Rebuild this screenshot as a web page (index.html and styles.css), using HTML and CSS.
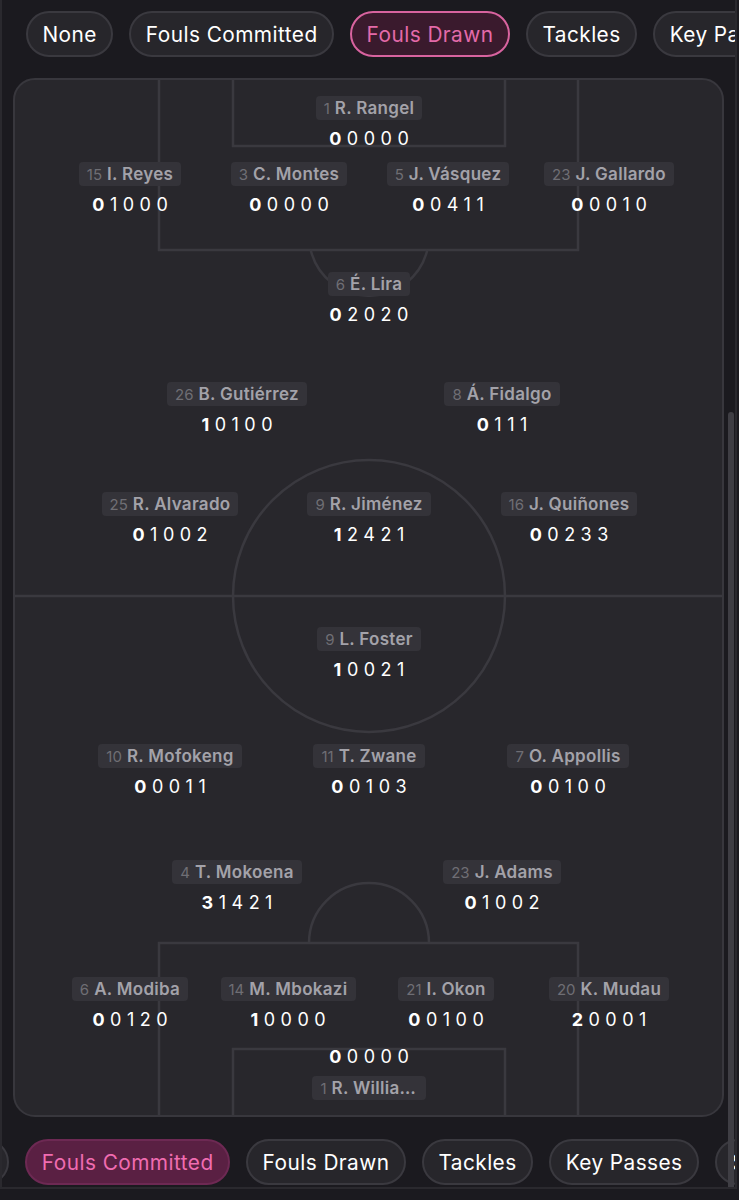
FILE: index.html
```html
<!DOCTYPE html>
<html>
<head>
<meta charset="utf-8">
<link rel="stylesheet" href="styles.css">
</head>
<body>
<div class="frame">
  <div class="chips">
    <div class="chip">None</div>
    <div class="chip">Fouls Committed</div>
    <div class="chip chip-active">Fouls Drawn</div>
    <div class="chip">Tackles</div>
    <div class="chip">Key Passes</div>
    <div class="chip">Shots</div>
  </div>

  <div class="pitch">
    <svg class="lines" width="707" height="1035" viewBox="15 80 707 1035">
      <line x1="15" y1="596" x2="722" y2="596"/>
      <circle cx="369" cy="596" r="136"/>
      <polyline points="159,70 159,250 578,250 578,70"/>
      <polyline points="233,70 233,146 505,146 505,70"/>
      <path d="M 310.7 250 A 60 60 0 0 0 427.3 250"/>
      <polyline points="159,1125 159,943 578,943 578,1125"/>
      <polyline points="233,1125 233,1049 505,1049 505,1125"/>
      <path d="M 309 943 A 60 60 0 0 1 429 943"/>
    </svg>

    <div class="player" style="left:354px;top:16px"><div class="tag"><span class="num">1</span><span class="name">R. Rangel</span></div><div class="stats"><b>0</b>0000</div></div>

    <div class="player" style="left:115px;top:82px"><div class="tag"><span class="num">15</span><span class="name">I. Reyes</span></div><div class="stats"><b>0</b>1000</div></div>
    <div class="player" style="left:274px;top:82px"><div class="tag"><span class="num">3</span><span class="name">C. Montes</span></div><div class="stats"><b>0</b>0000</div></div>
    <div class="player" style="left:433px;top:82px"><div class="tag"><span class="num">5</span><span class="name">J. Vásquez</span></div><div class="stats"><b>0</b>0411</div></div>
    <div class="player" style="left:594px;top:82px"><div class="tag"><span class="num">23</span><span class="name">J. Gallardo</span></div><div class="stats"><b>0</b>0010</div></div>

    <div class="player" style="left:354px;top:192px"><div class="tag"><span class="num">6</span><span class="name">É. Lira</span></div><div class="stats"><b>0</b>2020</div></div>

    <div class="player" style="left:222px;top:302px"><div class="tag"><span class="num">26</span><span class="name">B. Gutiérrez</span></div><div class="stats"><b>1</b>0100</div></div>
    <div class="player" style="left:487px;top:302px"><div class="tag"><span class="num">8</span><span class="name">Á. Fidalgo</span></div><div class="stats"><b>0</b>111</div></div>

    <div class="player" style="left:155px;top:412px"><div class="tag"><span class="num">25</span><span class="name">R. Alvarado</span></div><div class="stats"><b>0</b>1002</div></div>
    <div class="player" style="left:354px;top:412px"><div class="tag"><span class="num">9</span><span class="name">R. Jiménez</span></div><div class="stats"><b>1</b>2421</div></div>
    <div class="player" style="left:554px;top:412px"><div class="tag"><span class="num">16</span><span class="name">J. Quiñones</span></div><div class="stats"><b>0</b>0233</div></div>

    <div class="player" style="left:354px;top:547px"><div class="tag"><span class="num">9</span><span class="name">L. Foster</span></div><div class="stats"><b>1</b>0021</div></div>

    <div class="player" style="left:155px;top:664px"><div class="tag"><span class="num">10</span><span class="name">R. Mofokeng</span></div><div class="stats"><b>0</b>0011</div></div>
    <div class="player" style="left:354px;top:664px"><div class="tag"><span class="num">11</span><span class="name">T. Zwane</span></div><div class="stats"><b>0</b>0103</div></div>
    <div class="player" style="left:553px;top:664px"><div class="tag"><span class="num">7</span><span class="name">O. Appollis</span></div><div class="stats"><b>0</b>0100</div></div>

    <div class="player" style="left:222px;top:780px"><div class="tag"><span class="num">4</span><span class="name">T. Mokoena</span></div><div class="stats"><b>3</b>1421</div></div>
    <div class="player" style="left:487px;top:780px"><div class="tag"><span class="num">23</span><span class="name">J. Adams</span></div><div class="stats"><b>0</b>1002</div></div>

    <div class="player" style="left:115px;top:897px"><div class="tag"><span class="num">6</span><span class="name">A. Modiba</span></div><div class="stats"><b>0</b>0120</div></div>
    <div class="player" style="left:273px;top:897px"><div class="tag"><span class="num">14</span><span class="name">M. Mbokazi</span></div><div class="stats"><b>1</b>0000</div></div>
    <div class="player" style="left:431px;top:897px"><div class="tag"><span class="num">21</span><span class="name">I. Okon</span></div><div class="stats"><b>0</b>0100</div></div>
    <div class="player" style="left:594px;top:897px"><div class="tag"><span class="num">20</span><span class="name">K. Mudau</span></div><div class="stats"><b>2</b>0001</div></div>

    <div class="player player-rev" style="left:354px;top:965px"><div class="tag"><span class="num">1</span><span class="name name-trunc">R. Williams</span></div><div class="stats"><b>0</b>0000</div></div>
  </div>

  <div class="chips chips-bottom">
    <div class="chip chip-scrolled">None</div>
    <div class="chip chip-filled">Fouls Committed</div>
    <div class="chip">Fouls Drawn</div>
    <div class="chip">Tackles</div>
    <div class="chip">Key Passes</div>
    <div class="chip">Shots</div>
  </div>

  <div class="scrollbar"></div>
</div>
</body>
</html>
```

FILE: styles.css
```css
* { box-sizing: border-box; }
html, body {
  margin: 0;
  padding: 0;
  background: #1b1a1f;
  font-family: Inter, "Noto Sans", "Liberation Sans", sans-serif;
}
.frame {
  position: relative;
  width: 737px;
  height: 1189px;
  border-left: 2px solid #2a292e;
  border-right: 2px solid #2a292e;
  border-bottom: 2px solid #2a292e;
  overflow: hidden;
}
.chips {
  display: flex;
  gap: 16px;
  padding: 11px 0 0 24px;
  white-space: nowrap;
}
.chip {
  flex: none;
  height: 46px;
  padding: 0 14.5px;
  display: flex;
  align-items: center;
  border-radius: 23px;
  background: #27262b;
  border: 2px solid #3a393f;
  color: #ffffff;
  font-size: 20.8px;
  letter-spacing: 0.45px;
}
.chip-active {
  background: #3a1a2d;
  border-color: #d8639f;
  color: #e46aa9;
}
.chip-filled {
  background: #5a2043;
  border-color: #6d2953;
  color: #f06cb1;
}
.chips-bottom {
  padding-top: 0;
  margin-top: 22px;
}
.chip-scrolled {
  margin-left: -104px;
}
.pitch {
  position: relative;
  margin: 21px 0 0 11px;
  width: 711px;
  height: 1039px;
  border: 2px solid #38373d;
  border-radius: 22px;
  background: #28272c;
  overflow: hidden;
}
.lines {
  position: absolute;
  left: 0;
  top: 0;
  fill: none;
  stroke: #3a393f;
  stroke-width: 2.5;
}
.player {
  position: absolute;
  width: 0;
  display: flex;
  flex-direction: column;
  align-items: center;
  gap: 7px;
}
.player-rev {
  flex-direction: column-reverse;
}
.tag {
  flex: none;
  display: flex;
  align-items: baseline;
  gap: 5px;
  height: 24px;
  line-height: 24px;
  padding: 0 8px;
  border-radius: 4px;
  background: #343339;
  white-space: nowrap;
}
.num {
  font-size: 15px;
  color: #6f6e74;
}
.name {
  font-size: 17px;
  font-weight: 600;
  color: #a3a2a9;
  letter-spacing: 0.3px;
}
.name-trunc {
  display: inline-block;
  max-width: 86px;
  overflow: hidden;
  text-overflow: ellipsis;
  vertical-align: top;
}
.stats {
  flex: none;
  height: 24px;
  line-height: 24px;
  font-size: 18px;
  color: #ffffff;
  letter-spacing: 5.5px;
  margin-right: -5.5px;
  white-space: nowrap;
}
.stats b {
  font-weight: 700;
}
.scrollbar {
  position: absolute;
  left: 726px;
  top: 412px;
  width: 6px;
  height: 780px;
  border-radius: 3px;
  background: #3f3e44;
}
```
